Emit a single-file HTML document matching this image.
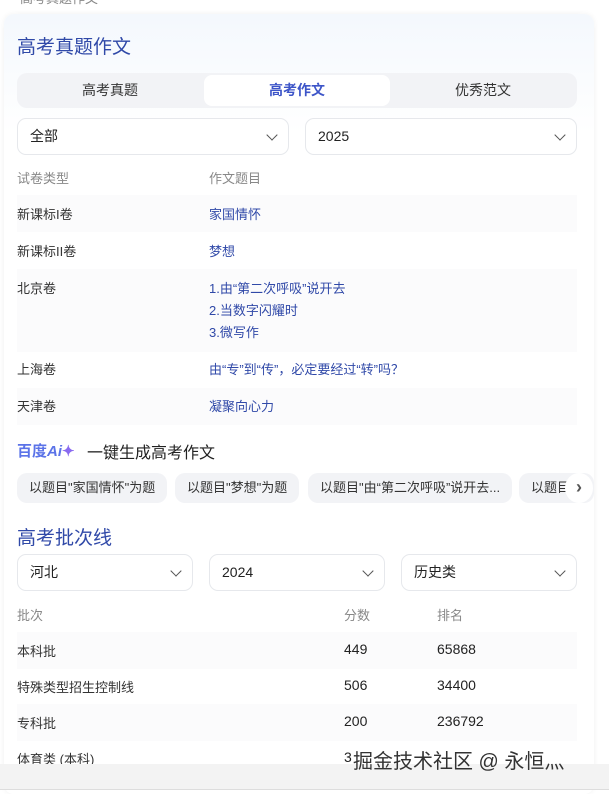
<!DOCTYPE html>
<html><head><meta charset="utf-8"><style>
*{margin:0;padding:0;box-sizing:border-box}
body{width:609px;height:790px;overflow:hidden;background:#fff;font-family:"Liberation Sans","Noto Sans CJK SC",sans-serif;color:#222;position:relative}
.card{position:absolute;left:4px;top:14px;width:590px;height:780px;background:linear-gradient(#f4f8fd,#fff 120px);border-radius:10px;box-shadow:0 0 6px rgba(0,0,0,.06)}
.a{position:absolute;white-space:nowrap}
.h{font-size:19px;color:#3049a8}
.tabs{position:absolute;left:17px;top:73px;width:560px;height:35px;background:#f2f3f6;border-radius:10px}
.tab{position:absolute;top:2px;height:31px;width:186px;text-align:center;line-height:31px;font-size:14px;color:#333}
.sel{position:absolute;height:37px;border:1px solid #e6e8ec;border-radius:9px;background:#fff;font-size:14px;line-height:35px;padding-left:12px;color:#222}
.sel:after{content:"";position:absolute;right:12px;top:12px;width:7px;height:7px;border-right:1.3px solid #555;border-bottom:1.3px solid #555;transform:rotate(45deg)}
.t{font-size:13px;color:#333}
.n{font-size:14px;color:#222}
.g{color:#888}
.l{color:#3049a8}
.row{position:absolute;left:17px;width:560px;background:#fbfbfc}
.chip{position:absolute;top:473px;height:30px;background:#f2f3f6;border-radius:10px;font-size:13px;line-height:30px;padding:0 12px;color:#333}
</style></head><body>
<div class="a t g" style="left:20px;top:-12px">高考真题作文</div>
<div class="card"></div>
<div class="a h" style="left:17px;top:32px">高考真题作文</div>
<div class="tabs">
<div class="tab" style="left:0">高考真题</div>
<div class="tab" style="left:187px;background:#fff;border-radius:8px;color:#3d55c8;font-weight:bold">高考作文</div>
<div class="tab" style="left:373px">优秀范文</div>
</div>
<div class="sel" style="left:17px;top:118px;width:272px">全部</div>
<div class="sel" style="left:305px;top:118px;width:272px">2025</div>
<div class="row" style="top:195px;height:37px"></div>
<div class="row" style="top:269px;height:83px"></div>
<div class="row" style="top:388px;height:37px"></div>
<div class="a t g" style="left:17px;top:168px">试卷类型</div>
<div class="a t g" style="left:209px;top:168px">作文题目</div>
<div class="a t" style="left:17px;top:204px">新课标I卷</div><div class="a t l" style="left:209px;top:204px">家国情怀</div>
<div class="a t" style="left:17px;top:241px">新课标II卷</div><div class="a t l" style="left:209px;top:241px">梦想</div>
<div class="a t" style="left:17px;top:278px">北京卷</div>
<div class="a t l" style="left:209px;top:278px;line-height:22px">1.由“第二次呼吸”说开去<br>2.当数字闪耀时<br>3.微写作</div>
<div class="a t" style="left:17px;top:359px">上海卷</div><div class="a t l" style="left:209px;top:359px">由“专”到“传”，必定要经过“转”吗？</div>
<div class="a t" style="left:17px;top:396px">天津卷</div><div class="a t l" style="left:209px;top:396px">凝聚向心力</div>
<div class="a" style="left:17px;top:440px;font-size:15px;font-weight:bold;color:#5b73e8">百度<span style="font-style:italic">Ai</span><span style="color:#8a6af0">✦</span></div>
<div class="a" style="left:87px;top:439px;font-size:16px;color:#222">一键生成高考作文</div>
<div class="chip" style="left:17px">以题目"家国情怀"为题</div>
<div class="chip" style="left:175px">以题目"梦想"为题</div>
<div class="chip" style="left:308px">以题目"由“第二次呼吸”说开去...</div>
<div class="chip" style="left:519px;width:75px;overflow:hidden">以题目"</div>
<div class="a" style="left:565px;top:473px;width:28px;height:30px;background:#fff;border-radius:50%;font-size:18px;font-weight:bold;line-height:28px;text-align:center;color:#555">›</div>
<div class="a h" style="left:17px;top:523px">高考批次线</div>
<div class="sel" style="left:17px;top:554px;width:176px">河北</div>
<div class="sel" style="left:209px;top:554px;width:176px">2024</div>
<div class="sel" style="left:401px;top:554px;width:176px">历史类</div>
<div class="row" style="top:632px;height:37px"></div>
<div class="row" style="top:704px;height:37px"></div>
<div class="a t g" style="left:17px;top:605px">批次</div><div class="a t g" style="left:344px;top:605px">分数</div><div class="a t g" style="left:437px;top:605px">排名</div>
<div class="a t" style="left:17px;top:641px">本科批</div><div class="a n" style="left:344px;top:641px">449</div><div class="a n" style="left:437px;top:641px">65868</div>
<div class="a t" style="left:17px;top:677px">特殊类型招生控制线</div><div class="a n" style="left:344px;top:677px">506</div><div class="a n" style="left:437px;top:677px">34400</div>
<div class="a t" style="left:17px;top:713px">专科批</div><div class="a n" style="left:344px;top:713px">200</div><div class="a n" style="left:437px;top:713px">236792</div>
<div class="a t" style="left:17px;top:749px">体育类 (本科)</div><div class="a n" style="left:344px;top:749px">3</div>
<div class="a" style="left:0;top:764px;width:609px;height:26px;background:#f3f3f3;border-bottom:1px solid #ddd"></div>
<div class="a" style="left:353px;top:745px;font-size:20px;color:#333">掘金技术社区 @ 永恒灬</div>
</body></html>
